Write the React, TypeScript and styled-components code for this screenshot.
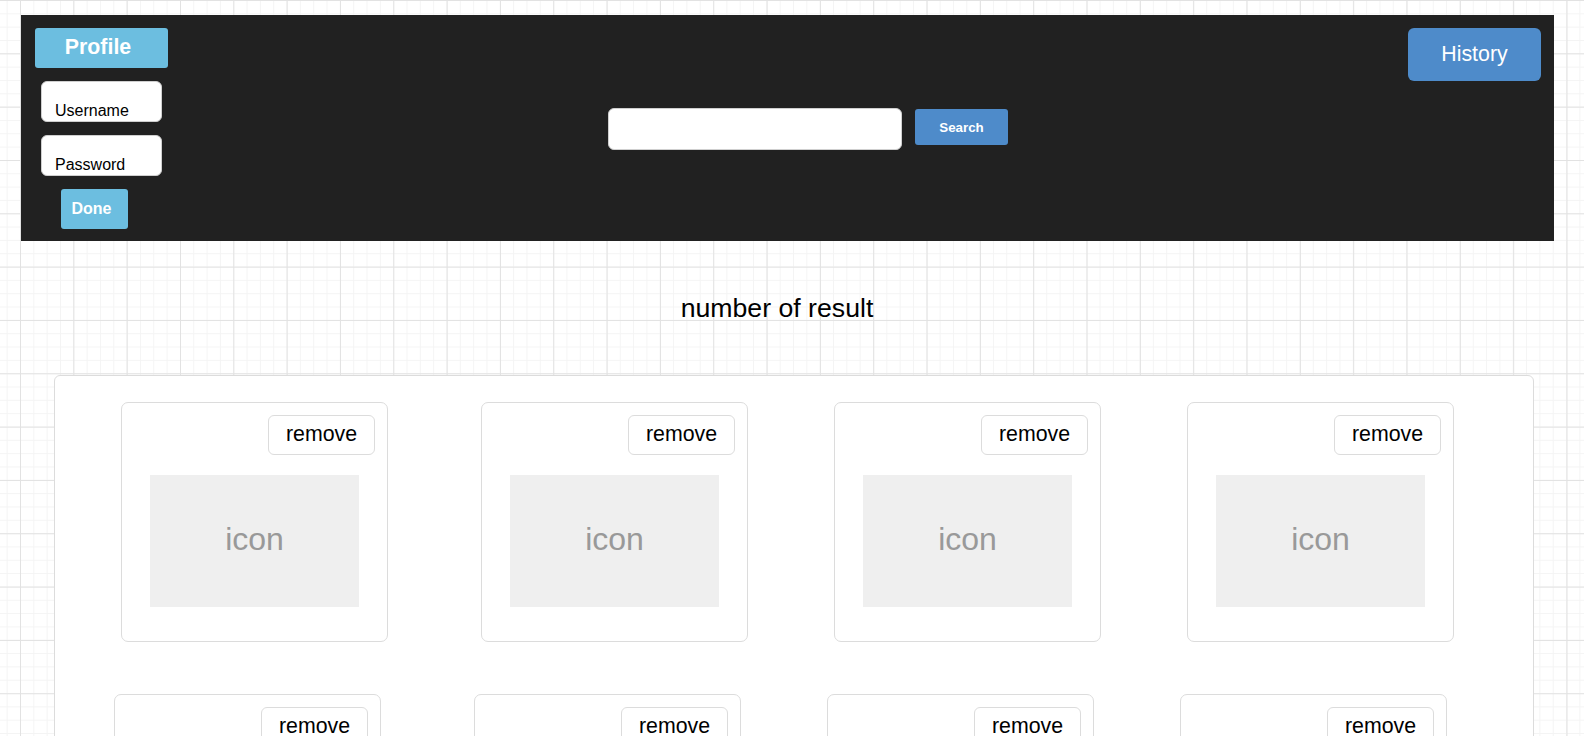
import React from "react";
import styled, { createGlobalStyle } from "styled-components";

// canvas look: draw.io grid at 4/3 zoom
const GlobalStyle = createGlobalStyle`
  html, body {
    margin: 0;
    padding: 0;
    height: 736px;
    overflow: hidden;
  }
  body {
    font-family: "Liberation Sans", Arial, Helvetica, sans-serif;
    background-color: #ffffff;
    background-image:
      linear-gradient(to right, #e2e2e2 1px, transparent 1px),
      linear-gradient(to bottom, #e2e2e2 1px, transparent 1px),
      linear-gradient(to right, #f4f4f4 1px, transparent 1px),
      linear-gradient(to bottom, #f4f4f4 1px, transparent 1px);
    background-size: 53.333px 53.333px, 53.333px 53.333px, 13.333px 13.333px,
      13.333px 13.333px;
    background-position: 20px 0, 20px 0, 20px 0, 20px 0;
  }
`;

const results = [
  [1, 2, 3, 4],
  [5, 6, 7, 8],
];

const App: React.FunctionComponent = () => {
  return (
    <Page>
      <GlobalStyle />
      <Header>
        <LoginColumn>
          <ProfileButton>Profile</ProfileButton>
          <Field>Username</Field>
          <Field>Password</Field>
          <DoneButton>Done</DoneButton>
        </LoginColumn>
        <SearchGroup>
          <SearchInput />
          <SearchButton>Search</SearchButton>
        </SearchGroup>
        <HistoryButton>History</HistoryButton>
      </Header>
      <ResultCount>number of result</ResultCount>
      <ResultsPanel>
        {results.map((row, rowIdx) => (
          <CardRow key={rowIdx} $shift={rowIdx === 0 ? 0 : -7}>
            {row.map((id) => (
              <ResultCard key={id}>
                <RemoveButton>remove</RemoveButton>
                <IconBox>icon</IconBox>
              </ResultCard>
            ))}
          </CardRow>
        ))}
      </ResultsPanel>
    </Page>
  );
};

const Page = styled.div`
  padding-top: 15px;
`;

const Header = styled.header`
  margin-left: 21px;
  width: 1533px;
  height: 226px;
  box-sizing: border-box;
  padding: 13px 13px 13px 14px;
  background: #212121;
  display: grid;
  grid-template-columns: 1fr auto 1fr;
  align-items: center;
`;

const LoginColumn = styled.div`
  align-self: start;
  display: flex;
  flex-direction: column;
  align-items: flex-start;
  gap: 13px;
`;

const ProfileButton = styled.div`
  width: 133px;
  height: 40px;
  box-sizing: border-box;
  padding: 0 7px 2px 0;
  border-radius: 3px;
  background: #6cbee0;
  color: #ffffff;
  font-weight: 700;
  font-size: 21.33px;
  display: flex;
  align-items: center;
  justify-content: center;
`;

const Field = styled.div`
  margin-left: 6px;
  width: 121px;
  height: 41px;
  box-sizing: border-box;
  padding: 0 13px 1px;
  border: 1px solid #cfcfcf;
  border-radius: 6px;
  background: #ffffff;
  color: #000000;
  font-size: 16px;
  display: flex;
  align-items: flex-end;
`;

const DoneButton = styled.div`
  margin-left: 26px;
  width: 67px;
  height: 40px;
  box-sizing: border-box;
  padding-right: 6px;
  border-radius: 3px;
  background: #6cbee0;
  color: #ffffff;
  font-weight: 700;
  font-size: 16px;
  display: flex;
  align-items: center;
  justify-content: center;
`;

const SearchGroup = styled.div`
  margin-left: 40px;
  display: flex;
  align-items: flex-start;
  gap: 13px;
`;

const SearchInput = styled.div`
  width: 294px;
  height: 42px;
  box-sizing: border-box;
  border: 1px solid #cfcfcf;
  border-radius: 6px;
  background: #ffffff;
`;

const SearchButton = styled.div`
  margin-top: 1px;
  width: 93px;
  height: 36px;
  box-sizing: border-box;
  padding-top: 2px;
  border-radius: 3px;
  background: #4e8bca;
  color: #ffffff;
  font-weight: 700;
  font-size: 13.33px;
  display: flex;
  align-items: center;
  justify-content: center;
`;

const HistoryButton = styled.div`
  justify-self: end;
  align-self: start;
  width: 133px;
  height: 53px;
  border-radius: 6px;
  background: #4e8bca;
  color: #ffffff;
  font-size: 21.33px;
  display: flex;
  align-items: center;
  justify-content: center;
`;

const ResultCount = styled.h2`
  margin: 0;
  height: 134px;
  padding-right: 30px;
  display: flex;
  align-items: center;
  justify-content: center;
  font-weight: 400;
  font-size: 26.67px;
  color: #000000;
`;

const ResultsPanel = styled.section`
  margin-left: 54px;
  width: 1480px;
  box-sizing: border-box;
  padding: 26px 0 40px 66px;
  border: 1px solid #dcdcdc;
  border-radius: 6px;
  background: #ffffff;
  display: flex;
  flex-direction: column;
  gap: 52px;
`;

const CardRow = styled.div<{ $shift: number }>`
  display: flex;
  gap: 86px;
  margin-left: ${(p) => p.$shift}px;

  & > :first-child {
    margin-right: 7px;
  }
`;

const ResultCard = styled.div`
  width: 267px;
  height: 240px;
  box-sizing: border-box;
  padding: 12px 12px 0;
  border: 1px solid #dcdcdc;
  border-radius: 7px;
  background: #ffffff;
  display: flex;
  flex-direction: column;
`;

const RemoveButton = styled.div`
  align-self: flex-end;
  width: 107px;
  height: 40px;
  box-sizing: border-box;
  padding-bottom: 2px;
  border: 1px solid #dcdcdc;
  border-radius: 6px;
  background: #ffffff;
  color: #000000;
  font-size: 21.33px;
  display: flex;
  align-items: center;
  justify-content: center;
`;

const IconBox = styled.div`
  align-self: center;
  margin-top: 20px;
  width: 209px;
  height: 132px;
  box-sizing: border-box;
  padding-bottom: 4px;
  background: #efefef;
  color: #999999;
  font-size: 32px;
  display: flex;
  align-items: center;
  justify-content: center;
`;

export default App;
